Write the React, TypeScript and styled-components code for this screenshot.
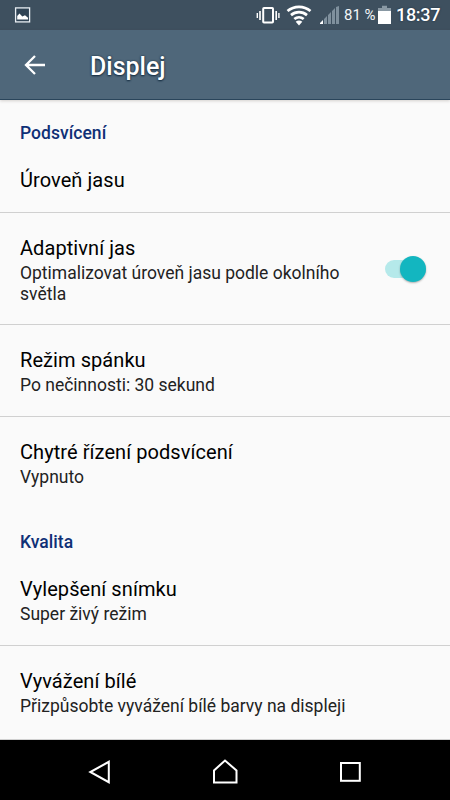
import React from "react";
import styled, { createGlobalStyle } from "styled-components";

const GlobalStyle = createGlobalStyle`
  * { box-sizing: border-box; }
  body { margin: 0; background: #fafafa; }
`;

const Screen = styled.div`
  width: 450px;
  height: 800px;
  display: flex;
  flex-direction: column;
  overflow: hidden;
  background: #fafafa;
  color: #111;
  font-family: Roboto, sans-serif;
`;

const StatusBar = styled.header`
  height: 30px;
  flex: none;
  display: flex;
  align-items: center;
  padding: 0 10px 0 14px;
  background: #3e505f;
  color: #fff;
  svg { display: block; flex: none; }
`;

const StatusGroup = styled.div`
  margin-left: auto;
  display: flex;
  align-items: center;
`;

const Percent = styled.span`
  width: 34px;
  margin-left: 4px;
  font-size: 15px;
  line-height: 32px;
  white-space: nowrap;
  color: #f2f5f7;
`;

const Clock = styled.span`
  width: 44px;
  margin-left: 5px;
  font-size: 18px;
  font-weight: 500;
  line-height: 34px;
  letter-spacing: -0.3px;
  text-shadow: 0 0 2px #162d3f;
`;

const AppBar = styled.div`
  height: 70px;
  flex: none;
  display: flex;
  align-items: center;
  padding-left: 24px;
  background: #4f677a;
  border-bottom: 1px solid #2a455b;
  box-shadow: 0 1px 3px rgba(60, 40, 30, 0.2);
  color: #fff;
  svg { display: block; }
`;

const Title = styled.h1`
  margin: 4px 0 0 43px;
  font-size: 25px;
  line-height: 30px;
  font-weight: 500;
  text-shadow: 0 0 2px #142c40, 0 1px 2px #142c40;
`;

const Content = styled.main`
  flex: 1;
  min-height: 0;
  overflow: hidden;
`;

const SectionTitle = styled.h2`
  height: 45px;
  margin: 0;
  padding: 22px 20px 0;
  font-size: 17.5px;
  line-height: 22px;
  font-weight: 500;
  letter-spacing: 0.03px;
  color: #0f3076;
`;

const Row = styled.div<{ $height: number; $divider?: boolean }>`
  height: ${(p) => p.$height}px;
  display: flex;
  justify-content: space-between;
  padding: 23px 24px 0 20px;
  border-bottom: ${(p) => (p.$divider ? "1px solid #d0d0d0" : "0")};
`;

const RowTitle = styled.div`
  font-size: 20px;
  line-height: 24px;
  letter-spacing: 0.07px;
  white-space: nowrap;
  color: #000;
`;

const Summary = styled.div`
  max-width: 335px;
  margin-top: 3px;
  font-size: 17.5px;
  line-height: 20.5px;
  color: #222;
`;

const Switch = styled.div`
  width: 41px;
  height: 18px;
  flex: none;
  margin-top: 24px;
  display: flex;
  align-items: center;
  justify-content: flex-end;
  background: #b5e9ea;
  border-radius: 9px;
`;

const Thumb = styled.div`
  width: 26px;
  height: 26px;
  flex: none;
  border-radius: 50%;
  background: #13b6c0;
  box-shadow: 0 1px 2px rgba(0, 0, 0, 0.3);
`;

const NavBar = styled.nav`
  height: 60px;
  flex: none;
  display: flex;
  align-items: center;
  justify-content: space-between;
  padding: 0 85px;
  background: #000;
  color: #fff;
  svg { display: block; }
`;

type SettingProps = {
  title: string;
  summary?: string;
  height?: number;
  divider?: boolean;
  children?: React.ReactNode;
};

function Setting({ title, summary, height = 92, divider, children }: SettingProps) {
  return (
    <Row $height={height} $divider={divider}>
      <div>
        <RowTitle>{title}</RowTitle>
        {summary && <Summary>{summary}</Summary>}
      </div>
      {children}
    </Row>
  );
}

export default function App() {
  return (
    <>
      <GlobalStyle />
      <Screen>
        <StatusBar>
          <svg width="17" height="16" viewBox="0 0 17 16">
            <rect x="1.6" y="0.9" width="14" height="14" fill="#2f4354" stroke="#e9eef3" strokeWidth="1.3" />
            <path d="M3.2 12.5V9l2.3-2.4 2.8 2.8 2.7-1.2 3 2.6v1.7z" fill="#fff" />
          </svg>
          <StatusGroup>
            <svg width="30" height="20" viewBox="0 0 30 20" fill="none" stroke="#fff">
              <rect x="7.2" y="2.9" width="9.800" height="14.600" rx="0.800" strokeWidth="2" />
              <path d="M4 6v9M20.2 6v9" strokeWidth="1.6" />
              <path d="M1.300 8v5M22.900 8v5" strokeWidth="1.4" />
            </svg>
            <svg width="26" height="22" viewBox="0 0 26 22" fill="none" stroke="#fff" strokeWidth="2.7">
              <path d="M1.5 7.1c6.6-5.7 16.4-5.7 23 0M5 11.1c4.7-4 11.3-4 16 0M8.3 15c2.8-2.3 6.6-2.3 9.4 0" />
              <path d="M13 21.5 9.7 17.7c2-1.5 4.6-1.5 6.6 0z" fill="#fff" stroke="none" />
            </svg>
            <svg width="28" height="20" viewBox="0 0 28 20" fill="#7f909d">
              <path d="M8 19v-1l3-3v4z" fill="#fff" />
              <path d="M12 19v-5l3-3v8zM16 19v-9l3-3v12zM20 19V6l3-3v16zM24 19V2l3-1v18z" />
            </svg>
            <Percent>81 %</Percent>
            <svg width="13" height="20" viewBox="0 0 13 20">
              <path d="M4 .8h5v2.3h4v3H0v-3h4z" fill="#8998a3" />
              <path d="M0 6h13v13H0z" fill="#fff" />
            </svg>
            <Clock>18:37</Clock>
          </StatusGroup>
        </StatusBar>
        <AppBar>
          <svg width="23" height="22" viewBox="0 0 23 22" fill="none" stroke="#fff" strokeWidth="2.3">
            <path d="M21 11H3M11 2l-9 9 9 9" />
          </svg>
          <Title>Displej</Title>
        </AppBar>
        <Content>
          <SectionTitle>Podsvícení</SectionTitle>
          <Setting title="Úroveň jasu" height={68} divider />
          <Setting title="Adaptivní jas" summary="Optimalizovat úroveň jasu podle okolního světla" height={112} divider>
            <Switch><Thumb /></Switch>
          </Setting>
          <Setting title="Režim spánku" summary="Po nečinnosti: 30 sekund" divider />
          <Setting title="Chytré řízení podsvícení" summary="Vypnuto" />
          <SectionTitle>Kvalita</SectionTitle>
          <Setting title="Vylepšení snímku" summary="Super živý režim" divider />
          <Setting title="Vyvážení bílé" summary="Přizpůsobte vyvážení bílé barvy na displeji" height={94} divider />
        </Content>
        <NavBar>
          <svg width="30" height="30" viewBox="0 0 30 30" fill="none" stroke="#fff" strokeWidth="2">
            <path d="M23.8 6.8v20.4L5.3 17z" />
          </svg>
          <svg width="30" height="30" viewBox="0 0 30 30" fill="none" stroke="#fff" strokeWidth="2">
            <path d="M4 27.5V15.500L15 5.5 26.500 15.500v12z" />
          </svg>
          <svg width="30" height="30" viewBox="0 0 30 30" fill="none" stroke="#fff" strokeWidth="2">
            <rect x="6" y="8" width="18.800" height="17.800" />
          </svg>
        </NavBar>
      </Screen>
    </>
  );
}
